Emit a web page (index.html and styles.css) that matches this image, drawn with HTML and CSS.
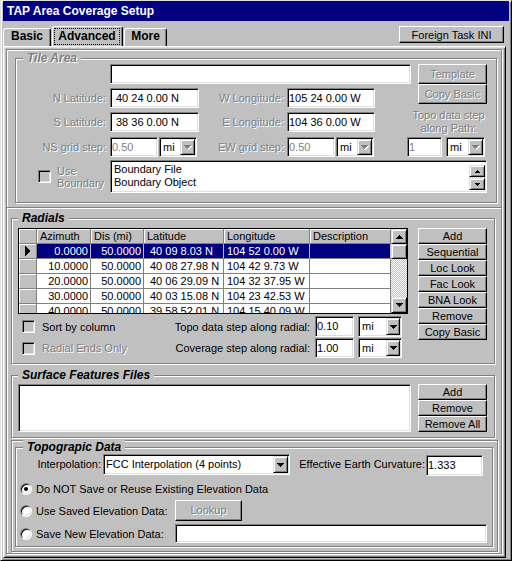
FILE: index.html
```html
<!DOCTYPE html>
<html>
<head>
<meta charset="utf-8">
<title>TAP Area Coverage Setup</title>
<link rel="stylesheet" href="styles.css">
</head>
<body>
<div class="window">
  <div class="titlebar">TAP Area Coverage Setup</div>
  <div class="tabrow">
    <div class="tab tab-basic">Basic</div>
    <div class="tab tab-sel"><span class="focus">Advanced</span></div>
    <div class="tab tab-more">More</div>
    <button class="btn btn-foreign">Foreign Task INI</button>
  </div>
  <div class="panel">
    <div class="well">
      <!-- Tile Area -->
      <div class="tile-sec">
        <div class="group g-tile">
          <div class="legend dis">Tile Area</div>
          <div class="tile-top">
            <div class="tile-left">
              <div class="trow"><div class="field f-blank"></div></div>
              <div class="trow mt4">
                <div class="lbl l1 dis">N Latitude:</div>
                <div class="field w89 pl5">40 24 0.00 N</div>
                <div class="lbl l2 dis">W Longitude:</div>
                <div class="field w88">105 24 0.00 W</div>
              </div>
              <div class="trow mt4">
                <div class="lbl l1 dis">S Latitude:</div>
                <div class="field w89 pl5">38 36 0.00 N</div>
                <div class="lbl l2 dis">E Longitude:</div>
                <div class="field w88">104 36 0.00 W</div>
              </div>
            </div>
            <div class="tile-right">
              <button class="btn h20 dis">Template</button>
              <button class="btn h20 dis">Copy Basic</button>
              <div class="path-lbl dis">Topo data step<br>along Path:</div>
            </div>
          </div>
          <div class="trow">
            <div class="lbl l1 dis">NS grid step:</div>
            <div class="fg w89">
              <div class="field w48 grey">0.50</div>
              <div class="combo w38 ml1"><span class="ctext">mi</span><span class="carrow"><svg width="8" height="5" viewBox="0 0 8 5"><path fill="#fff" transform="translate(1 1)" d="M0 0h7v1h-1v1h-1v1h-1v1h-1v-1h-1v-1h-1v-1h-1z"/><path fill="#808080" d="M0 0h7v1h-1v1h-1v1h-1v1h-1v-1h-1v-1h-1v-1h-1z"/></svg></span></div>
            </div>
            <div class="lbl l2 dis">EW grid step:</div>
            <div class="fg w88">
              <div class="field w48 grey">0.50</div>
              <div class="combo w38 ml1"><span class="ctext">mi</span><span class="carrow"><svg width="8" height="5" viewBox="0 0 8 5"><path fill="#fff" transform="translate(1 1)" d="M0 0h7v1h-1v1h-1v1h-1v1h-1v-1h-1v-1h-1v-1h-1z"/><path fill="#808080" d="M0 0h7v1h-1v1h-1v1h-1v1h-1v-1h-1v-1h-1v-1h-1z"/></svg></span></div>
            </div>
            <div class="field w35 ml32 grey">1</div>
            <div class="combo w39 ml4"><span class="ctext">mi</span><span class="carrow"><svg width="8" height="5" viewBox="0 0 8 5"><path fill="#fff" transform="translate(1 1)" d="M0 0h7v1h-1v1h-1v1h-1v1h-1v-1h-1v-1h-1v-1h-1z"/><path fill="#808080" d="M0 0h7v1h-1v1h-1v1h-1v1h-1v-1h-1v-1h-1v-1h-1z"/></svg></span></div>
          </div>
          <div class="bnd">
            <div class="bnd-left">
              <span class="check"></span>
              <span class="bnd-lbl dis">Use<br>Boundary</span>
            </div>
            <div class="listbox">
              <div class="items">
                <div>Boundary File</div>
                <div>Boundary Object</div>
              </div>
              <div class="mscroll">
                <span class="sbtn mini"><svg width="5" height="3" viewBox="0 0 5 3"><path d="M2 0h1v1h1v1h1v1h-5v-1h1v-1h1z"/></svg></span>
                <span class="mtrack"></span>
                <span class="sbtn mini"><svg width="5" height="3" viewBox="0 0 5 3"><path d="M0 0h5v1h-1v1h-1v1h-1v-1h-1v-1h-1z"/></svg></span>
              </div>
            </div>
          </div>
        </div>
      </div>

      <!-- Radials -->
      <div class="group g-rad">
        <div class="legend">Radials</div>
        <div class="rad-body">
          <div class="rad-left">
            <div class="grid">
              <div class="gcols">
                <div class="grow">
                  <div class="gc c0 fx"></div>
                  <div class="gc c1 fx">Azimuth</div>
                  <div class="gc c2 fx">Dis (mi)</div>
                  <div class="gc c3 fx">Latitude</div>
                  <div class="gc c4 fx">Longitude</div>
                  <div class="gc c5 fx">Description</div>
                </div>
                <div class="grow sel">
                  <div class="gc c0 fx ind"><svg width="5" height="10" viewBox="0 0 5 10"><path d="M0 0h1v1h1v1h1v1h1v1h1v2h-1v1h-1v1h-1v1h-1v1h-1z"/></svg></div>
                  <div class="gc c1 num">0.0000</div>
                  <div class="gc c2 num">50.0000</div>
                  <div class="gc c3 lat">40 09 8.03 N</div>
                  <div class="gc c4">104 52 0.00 W</div>
                  <div class="gc c5"></div>
                </div>
                <div class="grow">
                  <div class="gc c0 fx"></div>
                  <div class="gc c1 num">10.0000</div>
                  <div class="gc c2 num">50.0000</div>
                  <div class="gc c3 lat">40 08 27.98 N</div>
                  <div class="gc c4">104 42 9.73 W</div>
                  <div class="gc c5"></div>
                </div>
                <div class="grow">
                  <div class="gc c0 fx"></div>
                  <div class="gc c1 num">20.0000</div>
                  <div class="gc c2 num">50.0000</div>
                  <div class="gc c3 lat">40 06 29.09 N</div>
                  <div class="gc c4">104 32 37.95 W</div>
                  <div class="gc c5"></div>
                </div>
                <div class="grow">
                  <div class="gc c0 fx"></div>
                  <div class="gc c1 num">30.0000</div>
                  <div class="gc c2 num">50.0000</div>
                  <div class="gc c3 lat">40 03 15.08 N</div>
                  <div class="gc c4">104 23 42.53 W</div>
                  <div class="gc c5"></div>
                </div>
                <div class="grow">
                  <div class="gc c0 fx"></div>
                  <div class="gc c1 num">40.0000</div>
                  <div class="gc c2 num">50.0000</div>
                  <div class="gc c3 lat">39 58 52.01 N</div>
                  <div class="gc c4">104 15 40.09 W</div>
                  <div class="gc c5"></div>
                </div>
              </div>
              <div class="gscroll">
                <span class="sbtn sb-up"><svg width="7" height="4" viewBox="0 0 7 4"><path d="M3 0h1v1h1v1h1v1h1v1h-7v-1h1v-1h1v-1h1z"/></svg></span>
                <span class="sbtn sb-thumb"></span>
                <span class="track"></span>
                <span class="sbtn sb-down"><svg width="7" height="4" viewBox="0 0 7 4"><path d="M0 0h7v1h-1v1h-1v1h-1v1h-1v-1h-1v-1h-1v-1h-1z"/></svg></span>
              </div>
            </div>
            <div class="rrow r1">
              <span class="check ck"></span>
              <span class="cklbl">Sort by column</span>
              <span class="rl">Topo data step along radial:</span>
              <div class="field w39 h21 ml5">0.10</div>
              <div class="combo w44 h21 ml4"><span class="ctext">mi</span><span class="carrow a14"><svg width="7" height="4" viewBox="0 0 7 4"><path d="M0 0h7v1h-1v1h-1v1h-1v1h-1v-1h-1v-1h-1v-1h-1z"/></svg></span></div>
            </div>
            <div class="rrow r2">
              <span class="check ck"></span>
              <span class="cklbl dis">Radial Ends Only</span>
              <span class="rl">Coverage step along radial:</span>
              <div class="field w39 ml5">1.00</div>
              <div class="combo w44 ml4"><span class="ctext">mi</span><span class="carrow a14"><svg width="7" height="4" viewBox="0 0 7 4"><path d="M0 0h7v1h-1v1h-1v1h-1v1h-1v-1h-1v-1h-1v-1h-1z"/></svg></span></div>
            </div>
          </div>
          <div class="btncol ml10">
            <button class="btn h16">Add</button>
            <button class="btn h16">Sequential</button>
            <button class="btn h16">Loc Look</button>
            <button class="btn h16">Fac Look</button>
            <button class="btn h16">BNA Look</button>
            <button class="btn h16">Remove</button>
            <button class="btn h16">Copy Basic</button>
          </div>
        </div>
      </div>

      <!-- Surface Features -->
      <div class="group g-surf">
        <div class="legend">Surface Features Files</div>
        <div class="surf-body">
          <div class="surf-list"></div>
          <div class="btncol ml7">
            <button class="btn h16">Add</button>
            <button class="btn h16">Remove</button>
            <button class="btn h16">Remove All</button>
          </div>
        </div>
      </div>

      <!-- Topographic -->
      <div class="topo-frame">
        <div class="group g-topo">
          <div class="legend">Topograpic Data</div>
          <div class="irow">
            <span class="ilbl">Interpolation:</span>
            <div class="combo icombo h21"><span class="ctext pl1">FCC Interpolation (4 points)</span><span class="carrow"><svg width="7" height="4" viewBox="0 0 7 4"><path d="M0 0h7v1h-1v1h-1v1h-1v1h-1v-1h-1v-1h-1v-1h-1z"/></svg></span></div>
            <span class="elbl">Effective Earth Curvature:</span>
            <div class="field ecurv h21">1.333</div>
          </div>
          <div class="rad-row rr1">
            <span class="radio on"></span>
            <span class="rtext">Do NOT Save or Reuse Existing Elevation Data</span>
          </div>
          <div class="rad-row rr2">
            <div class="rcell"><span class="radio"></span><span class="rtext">Use Saved Elevation Data:</span></div>
            <button class="btn lookup dis">Lookup</button>
          </div>
          <div class="rad-row rr3">
            <div class="rcell"><span class="radio"></span><span class="rtext">Save New Elevation Data:</span></div>
            <div class="field savef"></div>
          </div>
        </div>
      </div>
    </div>
  </div>
</div>
</body>
</html>
```

FILE: styles.css
```css
* { box-sizing: border-box; }
html, body { margin: 0; padding: 0; }
body {
  width: 512px;
  height: 561px;
  overflow: hidden;
  background: #c0c0c0;
  font-family: "Liberation Sans", Arial, sans-serif;
  font-size: 11px;
  color: #000;
}

/* window frame */
.window {
  width: 512px;
  height: 561px;
  border: 1px solid;
  border-color: #dfdfdf #000 #000 #dfdfdf;
  box-shadow: inset 1px 1px #fff, inset -1px -1px #808080;
  padding: 0 2px 2px 2px;
  background: #c0c0c0;
}
.titlebar {
  height: 20px;
  background: #000080;
  color: #fff;
  font-weight: bold;
  font-size: 12px;
  line-height: 19px;
  padding: 1px 0 0 4px;
  white-space: nowrap;
}

/* tabs */
.tabrow {
  height: 25px;
  display: flex;
  align-items: flex-end;
}
.tab {
  font-weight: bold;
  font-size: 12px;
  text-align: center;
  background: #c0c0c0;
  border: 1px solid;
  border-bottom: 0;
  border-color: #fff #000 transparent #fff;
  border-radius: 3px 3px 0 0;
  box-shadow: inset -1px 0 #808080;
}
.tab-basic { width: 48px; height: 18px; line-height: 15px; }
.tab-sel { width: 71px; height: 20px; margin-left: 1px; }
.tab-more { width: 43px; height: 18px; line-height: 15px; margin-left: 1px; }
.focus {
  display: block;
  width: 66px;
  height: 17px;
  margin: 1px 0 0 1px;
  border: 1px dotted #000;
  line-height: 15px;
}

/* buttons */
.btn {
  display: block;
  font: inherit;
  font-size: 11px;
  margin: 0;
  padding: 0;
  color: #000;
  background: #c0c0c0;
  border: 1px solid;
  border-color: #fff #000 #000 #fff;
  box-shadow: inset -1px -1px #808080;
  text-align: center;
  white-space: nowrap;
}
.btn-foreign {
  align-self: flex-start;
  margin: 5px 5px 0 auto;
  width: 105px;
  height: 17px;
  line-height: 14px;
}
.h16 { height: 16px; line-height: 14px; }
.h20 { height: 20px; line-height: 18px; }

.dis { color: #808080; text-shadow: 1px 1px 0 #fff; }

/* panel */
.panel {
  width: 503px;
  height: 512px;
  border: 1px solid;
  border-color: #fff #000 #000 #fff;
  box-shadow: inset 1px 1px #dfdfdf, inset -1px -1px #808080;
  padding: 2px;
}
.well {
  width: 496px;
  height: 505px;
  border: 1px solid #808080;
  box-shadow: inset 1px 1px #fff, 1px 1px 0 #fff;
}

/* group boxes */
.group {
  border: 1px solid #808080;
  box-shadow: inset 1px 1px #fff, 1px 1px 0 #fff;
}
.legend {
  width: max-content;
  height: 14px;
  line-height: 14px;
  padding: 0 4px;
  background: #c0c0c0;
  font-weight: bold;
  font-style: italic;
  font-size: 12px;
  margin-top: -8px;
}

/* generic controls */
.field {
  height: 20px;
  line-height: 18px;
  padding: 0 1px;
  background: #fff;
  border: 1px solid;
  border-color: #808080 #fff #fff #808080;
  box-shadow: inset 1px 1px #000, inset -1px -1px #dfdfdf;
  white-space: nowrap;
  overflow: hidden;
  flex: none;
}
.field.h21 { height: 21px; line-height: 19px; }
.grey { color: #808080; }
.pl5 { padding-left: 5px; }
.combo {
  display: flex;
  flex: none;
  height: 20px;
  padding: 1px;
  background: #fff;
  border: 1px solid;
  border-color: #808080 #fff #fff #808080;
  box-shadow: inset 1px 1px #000, inset -1px -1px #dfdfdf;
}
.combo.h21 { height: 21px; }
.ctext {
  flex: 1;
  padding-left: 2px;
  line-height: 16px;
  white-space: nowrap;
  overflow: hidden;
}
.combo.h21 .ctext { line-height: 17px; }
.ctext.pl1 { padding-left: 1px; }
.carrow, .sbtn {
  display: flex;
  align-items: center;
  justify-content: center;
  background: #c0c0c0;
  border: 1px solid;
  border-color: #dfdfdf #000 #000 #dfdfdf;
  box-shadow: inset 1px 1px #fff, inset -1px -1px #808080;
}
.carrow { width: 15px; flex: none; }
.carrow.a14 { width: 14px; }
svg { display: block; }

.check {
  display: block;
  flex: none;
  width: 13px;
  height: 13px;
  background: #c0c0c0;
  border: 1px solid;
  border-color: #808080 #fff #fff #808080;
  box-shadow: inset 1px 1px #000, inset -1px -1px #dfdfdf;
}
.radio {
  display: flex;
  align-items: center;
  justify-content: center;
  flex: none;
  width: 12px;
  height: 12px;
  margin-left: 4px;
  border-radius: 50%;
  background: #fff;
  border: 1px solid;
  border-color: #808080 #fff #fff #808080;
  box-shadow: inset 1px 1px #000, inset -1px -1px #dfdfdf;
}
.radio.on::after {
  content: "";
  width: 4px;
  height: 4px;
  border-radius: 50%;
  background: #000;
}

.w35 { width: 35px; } .w38 { width: 38px; } .w39 { width: 39px; }
.w44 { width: 44px; } .w48 { width: 48px; } .w88 { width: 88px; } .w89 { width: 89px; }
.ml1 { margin-left: 1px; } .ml4 { margin-left: 4px; } .ml5 { margin-left: 5px; }
.ml7 { margin-left: 7px; } .ml10 { margin-left: 10px; } .ml32 { margin-left: 32px; }
.mt4 { margin-top: 4px; }

/* tile area */
.tile-sec {
  height: 158px;
  padding: 8px 0 0 8px;
  border-bottom: 1px solid #808080;
  box-shadow: 0 1px 0 #fff;
}
.g-tile { width: 482px; height: 145px; }
.g-tile .legend { margin-left: 7px; margin-bottom: -1px; }
.tile-top { display: flex; }
.tile-left { width: 395px; }
.tile-right { width: 69px; margin-left: 7px; }
.tile-right .btn { width: 69px; }
.trow { display: flex; height: 20px; }
.f-blank { margin-left: 94px; width: 301px; }
.lbl { line-height: 20px; text-align: right; white-space: nowrap; flex: none; }
.l1 { width: 90px; margin-right: 4px; }
.l2 { width: 85px; margin-right: 3px; }
.fg { display: flex; flex: none; }
.path-lbl {
  width: 81px;
  margin-left: -10px;
  padding: 5px 0 2px;
  line-height: 13px;
  text-align: center;
  white-space: nowrap;
}
.bnd { display: flex; margin-top: 3px; height: 33px; }
.bnd-left { width: 94px; display: flex; align-items: flex-start; }
.bnd-left .check { margin: 10px 0 0 22px; }
.bnd-lbl { margin: 5px 0 0 6px; line-height: 12px; }
.listbox {
  display: flex;
  width: 377px;
  height: 33px;
  padding: 1px;
  background: #fff;
  border: 1px solid;
  border-color: #808080 #fff #fff #808080;
  box-shadow: inset 1px 1px #000, inset -1px -1px #dfdfdf;
}
.items { flex: 1; padding: 1px 0 0 2px; line-height: 13px; }
.mscroll { width: 16px; margin-top: 3px; display: flex; flex-direction: column; }
.sbtn.mini { height: 12px; }
.mtrack {
  height: 1px;
  background: repeating-conic-gradient(#c0c0c0 0% 25%, #fff 0% 50%) 0 0 / 2px 2px;
}

/* radials */
.g-rad { margin: 10px 0 0 4px; width: 484px; height: 146px; }
.g-rad .legend { margin-left: 6px; margin-bottom: 3px; }
.rad-body { display: flex; align-items: flex-start; }
.rad-left { width: 390px; margin-left: 6px; }
.grid {
  display: flex;
  width: 390px;
  height: 86px;
  border: 1px solid #000;
  background: #fff;
}
.gcols { width: 372px; height: 84px; overflow: hidden; }
.grow { display: flex; height: 15px; }
.gc {
  height: 15px;
  flex: none;
  border-right: 1px solid #808080;
  border-bottom: 1px solid #808080;
  line-height: 14px;
  padding: 0 0 0 3px;
  white-space: nowrap;
  overflow: hidden;
}
.fx { background: #c0c0c0; box-shadow: inset 1px 1px #fff; }
.c0 { width: 18px; } .c1 { width: 54px; } .c2 { width: 53px; }
.c3 { width: 80px; } .c4 { width: 86px; } .c5 { width: 81px; }
.num { text-align: right; padding: 0 2px 0 0; }
.lat { padding-left: 6px; }
.ind { display: flex; align-items: center; justify-content: center; padding: 0; }
.sel .gc:not(.fx) { background: #000080; color: #fff; border-right-color: #c0c0c0; }
.gscroll { width: 16px; display: flex; flex-direction: column; }
.sb-up, .sb-thumb { height: 15px; }
.sb-down { height: 16px; }
.track {
  flex: 1;
  background: repeating-conic-gradient(#c0c0c0 0% 25%, #fff 0% 50%) 0 0 / 2px 2px;
}
.rrow { display: flex; align-items: center; padding-right: 6px; white-space: nowrap; }
.r1 { margin-top: 2px; height: 21px; }
.r2 { margin-top: 1px; height: 20px; }
.ck { margin-left: 4px; }
.cklbl { margin-left: 7px; }
.rl { margin-left: auto; }
.btncol { width: 69px; display: flex; flex-direction: column; }
.btncol .btn { width: 69px; }

/* surface features */
.g-surf { margin: 11px 0 0 4px; width: 484px; height: 63px; }
.g-surf .legend { margin-left: 6px; margin-bottom: 2px; }
.surf-body { display: flex; align-items: flex-start; }
.surf-list {
  width: 393px;
  height: 48px;
  margin-left: 6px;
  background: #fff;
  border: 1px solid;
  border-color: #808080 #fff #fff #808080;
  box-shadow: inset 1px 1px #000, inset -1px -1px #dfdfdf;
}

/* topographic */
.topo-frame {
  margin: 2px 0 0 4px;
  width: 487px;
  height: 112px;
  padding: 6px 0 0 3px;
  border: 1px solid #808080;
  box-shadow: inset 1px 1px #fff, 1px 1px 0 #fff;
}
.g-topo { width: 478px; height: 100px; }
.g-topo .legend { margin-left: 7px; }
.irow { display: flex; align-items: flex-start; height: 22px; padding-right: 9px; white-space: nowrap; }
.ilbl { width: 85px; text-align: right; line-height: 21px; flex: none; }
.icombo { margin-left: 2px; width: 187px; }
.elbl { margin-left: auto; margin-right: 1px; line-height: 21px; }
.ecurv { width: 57px; margin-top: 1px; }
.rad-row { display: flex; align-items: center; white-space: nowrap; }
.rr1 { margin-top: 5px; height: 16px; }
.rr2 { margin-top: 3px; height: 21px; }
.rr3 { margin-top: 3px; height: 19px; }
.rtext { margin-left: 4px; }
.rcell { width: 159px; height: 100%; display: flex; align-items: center; flex: none; }
.lookup { width: 67px; height: 21px; line-height: 19px; }
.savef { width: 312px; height: 19px; line-height: 17px; }
```
